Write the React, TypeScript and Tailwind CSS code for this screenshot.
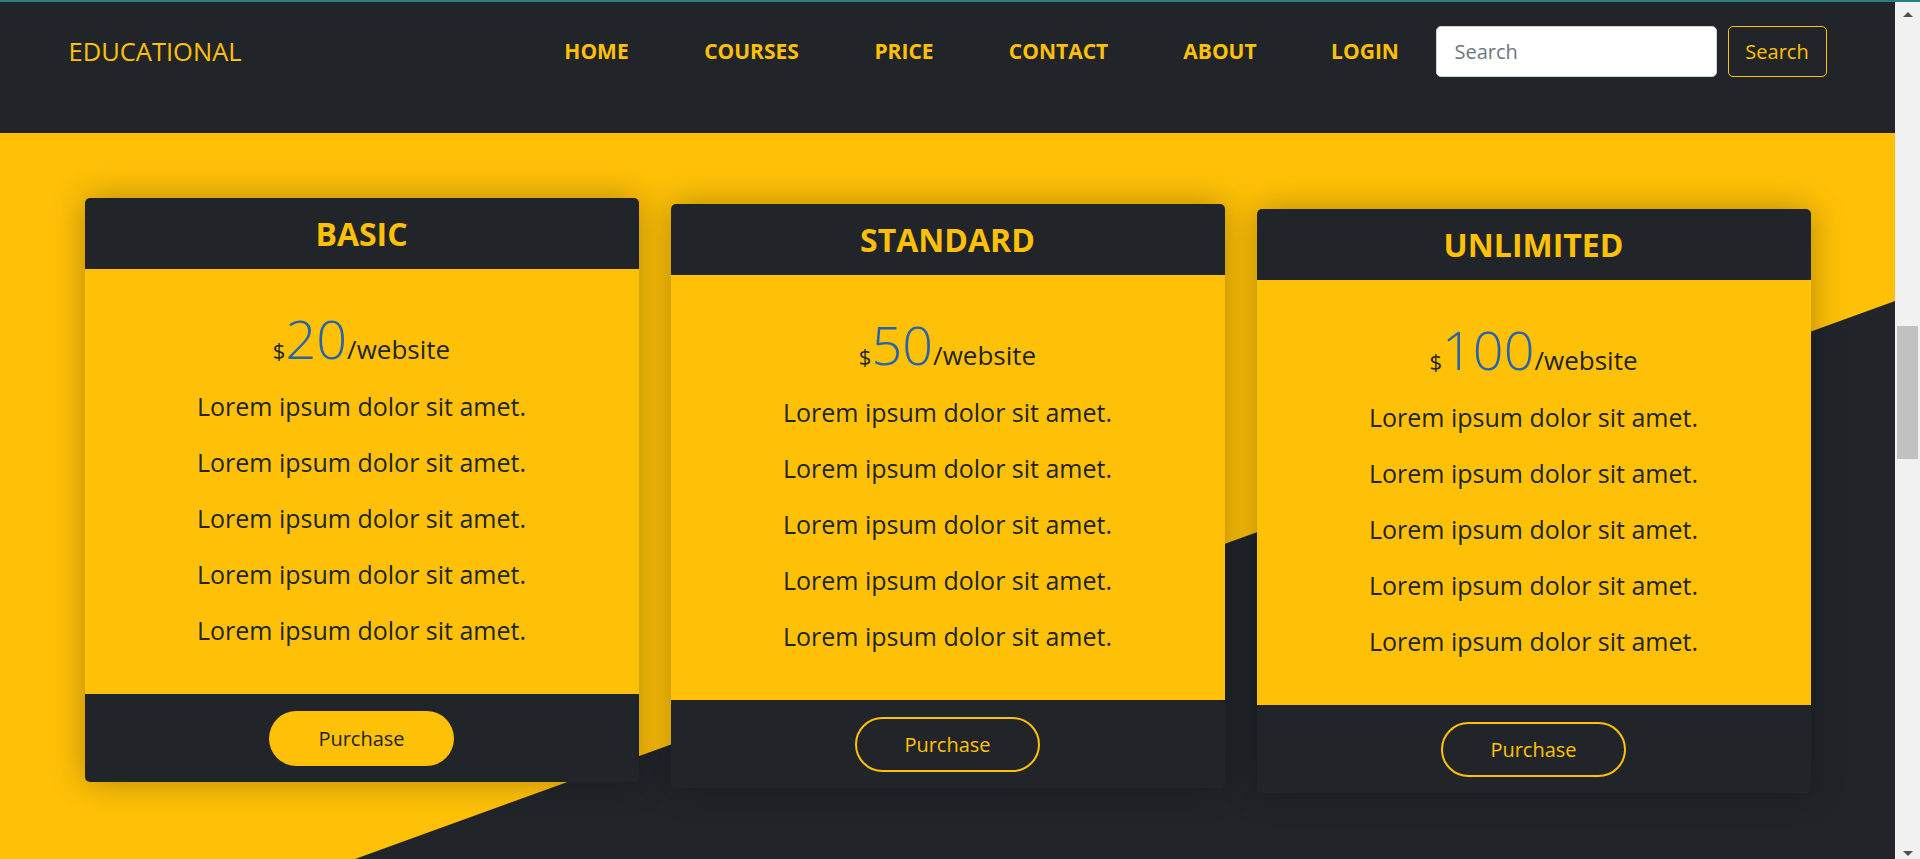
const links = [
  { label: "HOME", w: "w-[140px]" },
  { label: "COURSES", w: "w-[170px]" },
  { label: "PRICE", w: "w-[135px]" },
  { label: "CONTACT", w: "w-[174px]" },
  { label: "ABOUT", w: "w-[149px]" },
  { label: "LOGIN", w: "w-[141px]" },
];

const plans = [
  { name: "BASIC", price: "20", filled: true, offset: "mt-0" },
  { name: "STANDARD", price: "50", filled: false, offset: "mt-[6px]" },
  { name: "UNLIMITED", price: "100", filled: false, offset: "mt-[11px]" },
];

const features = [1, 2, 3, 4, 5];

function Navbar() {
  return (
    <nav className="h-[131px] shrink-0 bg-[#212529] pt-[24px]">
      <div className="mx-auto flex h-[51px] w-[1758px] items-center">
        <a href="#" className="text-[25.5px] text-[#ffc107]">
          EDUCATIONAL
        </a>
        <ul className="ml-auto flex items-center">
          {links.map((l) => (
            <li key={l.label} className={`${l.w} text-center`}>
              <a href="#" className="text-[21px] font-bold text-[#ffc107]">
                {l.label}
              </a>
            </li>
          ))}
        </ul>
        <form className="flex items-center" onSubmit={(e) => e.preventDefault()}>
          <input
            type="search"
            placeholder="Search"
            className="h-[51px] w-[281px] rounded-[5px] border border-[#ced4da] bg-white px-[18px] text-[20px] text-[#212529] outline-none placeholder:text-[#6c757d]"
          />
          <button className="ml-[11px] h-[51px] w-[99px] rounded-[5px] border border-[#ffc107] text-[20px] text-[#ffc107]">
            Search
          </button>
        </form>
      </div>
    </nav>
  );
}

function PriceCard({ plan }: { plan: (typeof plans)[number] }) {
  return (
    <div
      className={`${plan.offset} relative z-10 overflow-hidden rounded-[5px] shadow-[0_0_35px_rgba(0,0,0,0.3)]`}
    >
      <div className="flex h-[71px] items-center justify-center bg-[#212529]">
        <h2 className="text-[32px] font-bold text-[#ffc107]">{plan.name}</h2>
      </div>
      <div className="bg-[#ffc107] pb-[36px] pt-[42px] text-center text-[#212529]">
        <div className="flex items-baseline justify-center">
          <span className="text-[22px] leading-none">$</span>
          <span className="text-[54px] font-light leading-none text-[#2563ab]">{plan.price}</span>
          <span className="text-[26px] leading-none">/website</span>
        </div>
        <ul className="mt-[13px]">
          {features.map((f) => (
            <li key={f} className="text-[25px] leading-[56px]">
              Lorem ipsum dolor sit amet.
            </li>
          ))}
        </ul>
      </div>
      <div className="flex h-[88px] justify-center bg-[#212529] pt-[17px]">
        {plan.filled ? (
          <button className="h-[55px] w-[185px] rounded-full bg-[#ffc107] text-[20px] text-[#212529]">
            Purchase
          </button>
        ) : (
          <button className="h-[55px] w-[185px] rounded-full border-2 border-[#ffc107] text-[20px] text-[#ffc107]">
            Purchase
          </button>
        )}
      </div>
    </div>
  );
}

function Scrollbar() {
  return (
    <div className="flex w-[25px] shrink-0 flex-col items-center bg-[#f1f1f1] pt-[10px] pb-[3px]">
      <div className="h-0 w-0 border-x-[5px] border-b-[5px] border-x-transparent border-b-[#505050]" />
      <div className="mt-[309px] h-[133px] w-[21px] bg-[#c1c1c1]" />
      <div className="mt-auto h-0 w-0 border-x-[5px] border-t-[5px] border-x-transparent border-t-[#505050]" />
    </div>
  );
}

export default function App() {
  return (
    <div className="flex h-screen flex-col overflow-hidden font-['Open_Sans',sans-serif]">
      <div className="h-[2px] shrink-0 bg-[#2b7c80]" />
      <div className="flex min-h-0 flex-1">
        <div className="flex min-w-0 flex-1 flex-col">
          <Navbar />
          <section className="relative flex-1 overflow-hidden bg-[#ffc107]">
            <div className="absolute inset-0 bg-[#212529] [clip-path:polygon(100%_168px,100%_100%,355px_100%)]" />
            <div className="mx-auto grid w-[1758px] grid-cols-3 items-start gap-[32px] px-[16px] pt-[65px]">
              {plans.map((p) => (
                <PriceCard key={p.name} plan={p} />
              ))}
            </div>
          </section>
        </div>
        <Scrollbar />
      </div>
    </div>
  );
}
